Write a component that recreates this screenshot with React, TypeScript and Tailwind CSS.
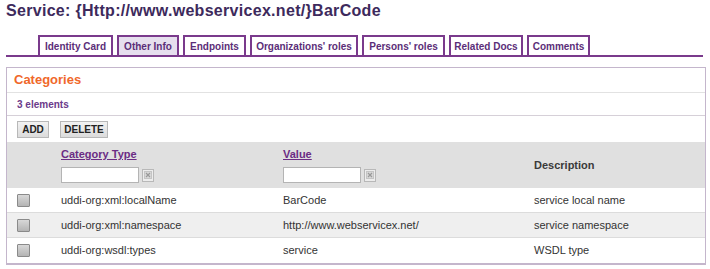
import React from "react";

const tabs = [
  { label: "Identity Card", w: 75 },
  { label: "Other Info", w: 62, active: true },
  { label: "Endpoints", w: 63 },
  { label: "Organizations' roles", w: 108 },
  { label: "Persons' roles", w: 83 },
  { label: "Related Docs", w: 74 },
  { label: "Comments", w: 63 },
];

const rows = [
  ["uddi-org:xml:localName", "BarCode", "service local name"],
  ["uddi-org:xml:namespace", "http://www.webservicex.net/", "service namespace"],
  ["uddi-org:wsdl:types", "service", "WSDL type"],
];

function ClearIcon() {
  return (
    <div className="w-[12px] h-[13px] border border-[#b8b8b8] bg-[#ececec] flex items-center justify-center">
      <svg width="8" height="8" viewBox="0 0 8 8">
        <rect x="0.5" y="0.5" width="7" height="7" fill="#d8d8d8" stroke="#c4c4c4" />
        <path d="M2 2 L6 6 M6 2 L2 6" stroke="#999" strokeWidth="1.2" />
      </svg>
    </div>
  );
}

function Checkbox() {
  return (
    <div className="w-[13px] h-[13px] border border-[#8a8a8a] bg-gradient-to-b from-[#d8d8d8] to-[#b4b4b4] rounded-[1px]" />
  );
}

export default function App() {
  return (
    <div
      className="w-[710px] h-[269px] bg-white overflow-hidden"
      style={{ fontFamily: "'Liberation Sans', Arial, sans-serif" }}
    >
      <h1 className="pl-[6px] pt-[1px] h-[22px] text-[16px] font-bold tracking-[0.3px] text-[#3d2a5c] leading-[20px] whitespace-nowrap">
        Service: {"{"}Http://www.webservicex.net/{"}"}BarCode
      </h1>
      <div className="mt-[13px] ml-[6px] w-[697px] border-b-2 border-[#7a3a8c] flex gap-[4px] pl-[32px] h-[22px]">
        {tabs.map((t) => (
          <div
            key={t.label}
            style={{ width: t.w }}
            className={`shrink-0 h-[20px] border-2 border-b-0 border-[#7a3a8c] flex items-center justify-center whitespace-nowrap text-[10px] font-bold text-[#5b2e78] ${
              t.active ? "bg-[#e6dfee]" : "bg-white"
            }`}
          >
            {t.label}
          </div>
        ))}
      </div>
      <div className="mt-[10px] ml-[6px] w-[700px] border border-[#c4b6cc] border-b-2">
        <div className="h-[25px] flex items-center px-[7px] border-b border-[#e2e2e2] text-[13px] font-bold text-[#f0682a]">
          Categories
        </div>
        <div className="h-[23px] flex items-center px-[10px] border-b border-[#d6d0d8] text-[10px] font-bold text-[#6b3a8a]">
          3 elements
        </div>
        <div className="h-[26px] flex items-center gap-[11px] pl-[10px]">
          <div className="w-[32px] h-[17px] flex items-center justify-center border border-[#b8b8b8] bg-gradient-to-b from-[#f2f2f2] to-[#dcdcdc] text-[10px] font-bold text-[#222]">
            ADD
          </div>
          <div className="w-[48px] h-[17px] flex items-center justify-center border border-[#b8b8b8] bg-gradient-to-b from-[#f2f2f2] to-[#dcdcdc] text-[10px] font-bold text-[#222]">
            DELETE
          </div>
        </div>
        <div className="h-[46px] bg-[#e0e0e0] flex text-[11px]">
          <div className="w-[54px]" />
          <div className="w-[222px] flex flex-col pt-[6px] gap-[6px]">
            <span className="font-bold text-[#6b2c84] underline leading-[13px]">Category Type</span>
            <div className="flex items-center gap-[3px]">
              <div className="w-[78px] h-[16px] bg-white border border-[#b4b4b4]" />
              <ClearIcon />
            </div>
          </div>
          <div className="w-[251px] flex flex-col pt-[6px] gap-[6px]">
            <span className="font-bold text-[#6b2c84] underline leading-[13px]">Value</span>
            <div className="flex items-center gap-[3px]">
              <div className="w-[78px] h-[16px] bg-white border border-[#b4b4b4]" />
              <ClearIcon />
            </div>
          </div>
          <div className="flex-1 flex items-center font-bold text-[#3a3a3a]">Description</div>
        </div>
        {rows.map((r, i) => (
          <div
            key={i}
            className={`h-[25px] flex items-center text-[11px] text-[#333] ${
              i === 1 ? "bg-[#efefef]" : "bg-white"
            } ${i < 2 ? "border-b border-[#dcdcdc]" : ""}`}
          >
            <div className="w-[54px] pl-[10px] flex items-center">
              <Checkbox />
            </div>
            <div className="w-[222px]">{r[0]}</div>
            <div className="w-[251px]">{r[1]}</div>
            <div className="flex-1">{r[2]}</div>
          </div>
        ))}
      </div>
    </div>
  );
}
